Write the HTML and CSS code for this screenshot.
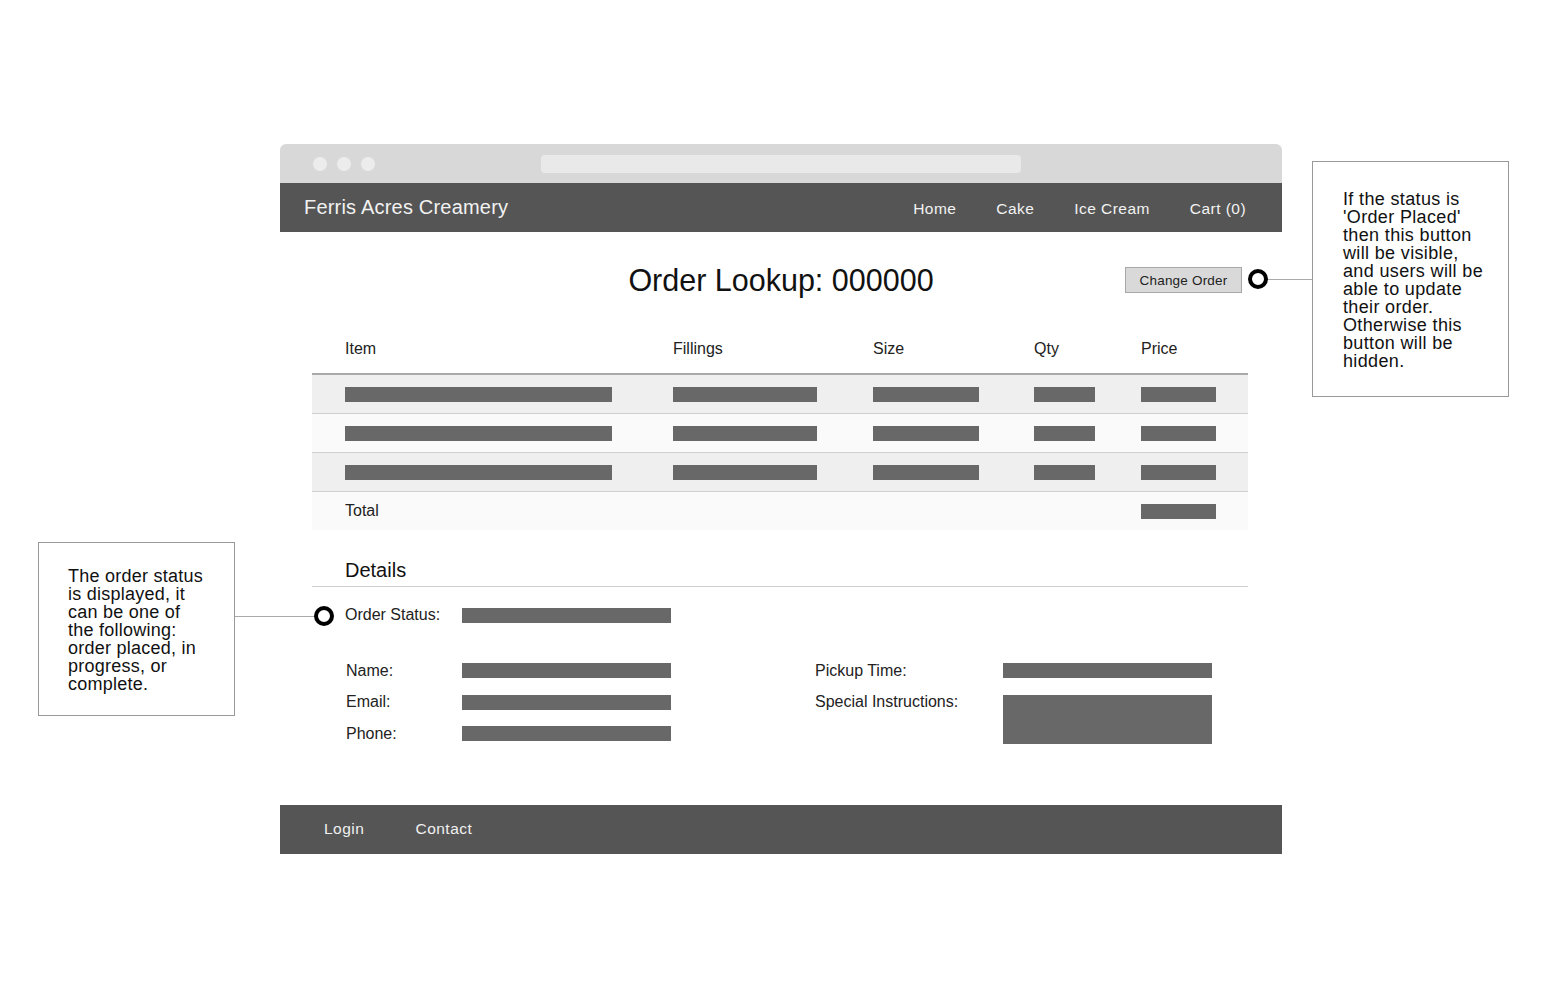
FILE: index.html
```html
<!DOCTYPE html>
<html lang="en">
<head>
    <meta charset="UTF-8">
    <meta name="viewport" content="width=device-width, initial-scale=1.0">
    <title>Order Lookup - Ferris Acres Creamery</title>
    <link rel="stylesheet" href="styles.css">
</head>
<body>
<div class="canvas">
    <div class="browser">
        <div class="chrome">
            <div class="dots"><span></span><span></span><span></span></div>
            <div class="address"></div>
        </div>
        <header class="nav">
            <div class="brand">Ferris Acres Creamery</div>
            <nav class="links">
                <a>Home</a>
                <a>Cake</a>
                <a>Ice Cream</a>
                <a>Cart (0)</a>
            </nav>
        </header>

        <main class="content">
            <div class="title-row">
                <h1>Order Lookup: 000000</h1>
                <button class="change-btn">Change Order</button>
            </div>

            <div class="order-table">
                <div class="row head">
                    <div>Item</div>
                    <div>Fillings</div>
                    <div>Size</div>
                    <div>Qty</div>
                    <div>Price</div>
                </div>
                <div class="row odd">
                    <div><i class="bar w-item"></i></div>
                    <div><i class="bar w-fill"></i></div>
                    <div><i class="bar w-size"></i></div>
                    <div><i class="bar w-qty"></i></div>
                    <div><i class="bar w-price"></i></div>
                </div>
                <div class="row even">
                    <div><i class="bar w-item"></i></div>
                    <div><i class="bar w-fill"></i></div>
                    <div><i class="bar w-size"></i></div>
                    <div><i class="bar w-qty"></i></div>
                    <div><i class="bar w-price"></i></div>
                </div>
                <div class="row odd">
                    <div><i class="bar w-item"></i></div>
                    <div><i class="bar w-fill"></i></div>
                    <div><i class="bar w-size"></i></div>
                    <div><i class="bar w-qty"></i></div>
                    <div><i class="bar w-price"></i></div>
                </div>
                <div class="row even total">
                    <div>Total</div>
                    <div></div>
                    <div></div>
                    <div></div>
                    <div><i class="bar w-price"></i></div>
                </div>
            </div>

            <section class="details">
                <h2>Details</h2>
                <div class="status-row">
                    <span class="label">Order Status:</span>
                    <i class="bar w-field"></i>
                </div>
                <div class="detail-cols">
                    <div class="col-left">
                        <div class="field"><span class="label">Name:</span><i class="bar w-field"></i></div>
                        <div class="field"><span class="label">Email:</span><i class="bar w-field"></i></div>
                        <div class="field"><span class="label">Phone:</span><i class="bar w-field"></i></div>
                    </div>
                    <div class="col-right">
                        <div class="field"><span class="label">Pickup Time:</span><i class="bar w-field"></i></div>
                        <div class="field tall"><span class="label">Special Instructions:</span><i class="bar w-field box"></i></div>
                    </div>
                </div>
            </section>
        </main>

        <footer class="foot">
            <a>Login</a>
            <a>Contact</a>
        </footer>
    </div>

    <!-- annotations -->
    <div class="note note-right">If the status is<br>'Order Placed'<br>then this button<br>will be visible,<br>and users will be<br>able to update<br>their order.<br>Otherwise this<br>button will be<br>hidden.</div>
    <div class="connector con-right"></div>
    <div class="marker mark-right"></div>

    <div class="note note-left">The order status<br>is displayed, it<br>can be one of<br>the following:<br>order placed, in<br>progress, or<br>complete.</div>
    <div class="connector con-left"></div>
    <div class="marker mark-left"></div>
</div>
</body>
</html>
```

FILE: styles.css
```css
body {
    margin: 0;
    background: #fff;
    font-family: 'Liberation Sans', Arial, sans-serif;
    color: #222;
}
.canvas {
    position: relative;
    width: 1563px;
    height: 1000px;
    overflow: hidden;
}
.browser {
    width: 1002px;
    margin: 144px 0 0 280px;
}

/* window chrome */
.chrome {
    height: 39px;
    background: #d8d8d8;
    border-radius: 6px 6px 0 0;
    display: flex;
    align-items: center;
}
.dots {
    display: flex;
    gap: 10px;
    margin-left: 33px;
}
.dots span {
    width: 14px;
    height: 14px;
    border-radius: 50%;
    background: #ececec;
}
.address {
    width: 480px;
    height: 18px;
    margin-left: 166px;
    border-radius: 4px;
    background: #e9e9e9;
}

/* nav */
.nav {
    height: 49px;
    background: #555;
    color: #f2f2f2;
    display: flex;
    align-items: center;
    justify-content: space-between;
    padding: 0 36px 0 24px;
}
.brand {
    font-size: 20px;
    letter-spacing: 0.2px;
    margin-top: -1px;
}
.links {
    display: flex;
    gap: 40px;
    font-size: 15.5px;
    letter-spacing: 0.45px;
    margin-top: 2px;
}

/* content */
.content {
    padding: 24px 34px 55px 32px;
}
.title-row {
    display: grid;
    grid-template-columns: 1fr auto 1fr;
    align-items: center;
    height: 48px;
}
.title-row h1 {
    grid-column: 2;
    margin: 0;
    font-size: 30.5px;
    font-weight: normal;
    color: #111;
    position: relative;
    left: 1px;
}
.change-btn {
    grid-column: 3;
    justify-self: end;
    margin-right: 6px;
    width: 117px;
    height: 26px;
    background: #d9d9d9;
    border: 1px solid #a8a8a8;
    font-family: inherit;
    font-size: 13.5px;
    letter-spacing: 0.2px;
    color: #222;
    padding: 0;
}

/* table */
.order-table {
    margin-top: 21px;
}
.row {
    display: grid;
    grid-template-columns: 328px 200px 161px 107px 1fr;
    align-items: center;
    padding-left: 33px;
    height: 38px;
    border-bottom: 1px solid #cfcfcf;
    font-size: 16px;
}
.row.head {
    height: 48px;
    border-bottom: 2px solid #a9a9a9;
    color: #222;
}
.row.odd { background: #efefef; }
.row.even { background: #fafafa; }
.row.total { border-bottom: none; }
.bar {
    display: block;
    height: 15px;
    background: #686868;
}
.w-item { width: 267px; }
.w-fill { width: 144px; }
.w-size { width: 106px; }
.w-qty { width: 61px; }
.w-price { width: 75px; }
.w-field { width: 209px; }
.box { height: 49px; }

/* details */
.details {
    margin-top: 29px;
}
.details h2 {
    margin: 0;
    padding: 0 0 4px 33px;
    font-size: 20px;
    font-weight: normal;
    color: #111;
    border-bottom: 1px solid #cfcfcf;
}
.status-row {
    display: flex;
    align-items: center;
    padding-left: 33px;
    margin-top: 19px;
    font-size: 16px;
}
.status-row .label {
    width: 117px;
}
.detail-cols {
    display: flex;
    padding-left: 34px;
    margin-top: 31px;
}
.col-left {
    width: 469px;
}
.field {
    display: flex;
    align-items: center;
    height: 31.5px;
    font-size: 16px;
}
.col-left .label { width: 116px; }
.col-right .label { width: 188px; }
.field.tall {
    align-items: flex-start;
    height: auto;
    margin-top: 8px;
}
.field.tall .label {
    margin-top: -2px;
}

/* footer */
.foot {
    height: 49px;
    background: #555;
    color: #f0f0f0;
    display: flex;
    align-items: center;
    gap: 51px;
    padding-left: 44px;
    font-size: 15.5px;
    letter-spacing: 0.5px;
}

/* annotations */
.note {
    position: absolute;
    background: #fff;
    border: 1px solid #999;
    font-size: 18px;
    line-height: 18px;
    color: #111;
    box-sizing: border-box;
}
.note-right {
    left: 1312px;
    top: 161px;
    width: 197px;
    height: 236px;
    padding: 28px 0 0 30px;
    letter-spacing: 0.35px;
}
.note-left {
    left: 38px;
    top: 542px;
    width: 197px;
    height: 174px;
    padding: 24px 0 0 29px;
    letter-spacing: 0.25px;
}
.connector {
    position: absolute;
    height: 1px;
    background: #aaa;
}
.con-right { left: 1266px; top: 279px; width: 46px; }
.con-left { left: 235px; top: 616px; width: 81px; }
.marker {
    position: absolute;
    width: 12px;
    height: 12px;
    border: 4px solid #000;
    border-radius: 50%;
    background: #fff;
}
.mark-right { left: 1248px; top: 269px; }
.mark-left { left: 314px; top: 606px; }
```
